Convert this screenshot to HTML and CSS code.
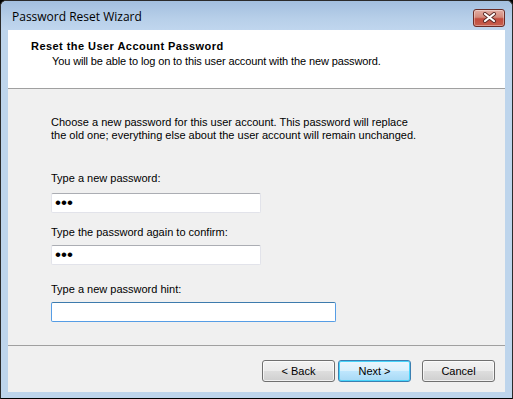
FILE: index.html
```html
<!DOCTYPE html>
<html lang="en">
<head>
  <meta charset="UTF-8">
  <title>Password Reset Wizard</title>
  <link rel="stylesheet" href="styles.css">
</head>
<body>
  <!-- Window frame -->
  <div class="window">
    <!-- Title bar with caption and close button -->
    <div class="titlebar">
      <span class="caption">Password Reset Wizard</span>
      <button class="close-btn" title="Close">
        <svg width="15" height="11" viewBox="0 0 15 11">
          <path d="M3 2 L12 9 M12 2 L3 9" stroke="#5a2a26" stroke-width="4" stroke-linecap="round"/>
          <path d="M3 2 L12 9 M12 2 L3 9" stroke="#fff" stroke-width="2.2" stroke-linecap="round"/>
        </svg>
      </button>
    </div>

    <div class="client">
      <!-- White wizard header -->
      <div class="wizard-header">
        <div class="wizard-title">Reset the User Account Password</div>
        <div class="wizard-subtitle">You will be able to log on to this user account with the new password.</div>
      </div>

      <!-- Page body with the form fields -->
      <div class="wizard-body">
        <p class="intro">
          Choose a new password for this user account. This password will replace<br>
          the old one; everything else about the user account will remain unchanged.
        </p>

        <label class="field-label first" for="pw1">Type a new password:</label>
        <input class="textbox short" type="password" id="pw1" value="abc">

        <label class="field-label" for="pw2">Type the password again to confirm:</label>
        <input class="textbox short" type="password" id="pw2" value="abc">

        <label class="field-label third" for="hint">Type a new password hint:</label>
        <input class="textbox long focused" type="text" id="hint">
      </div>

      <!-- Button row -->
      <div class="wizard-footer">
        <button class="btn back">&lt; Back</button>
        <button class="btn default">Next &gt;</button>
        <button class="btn cancel">Cancel</button>
      </div>
    </div>
  </div>
</body>
</html>
```

FILE: styles.css
```css
/* Page basics */
body {
  margin: 0;
  background: #000;
  font-family: 'Liberation Sans', Arial, sans-serif;
  font-size: 11px;
  color: #000;
}

/* Outer window frame */
.window {
  width: 511px;
  height: 397px;
  border: 1px solid #2b2b2b;
  border-bottom-color: #000;
  border-radius: 6px 6px 0 0;
  background: #bed5ec;
  display: flex;
  flex-direction: column;
}

/* Title bar */
.titlebar {
  height: 29px;
  display: flex;
  align-items: center;
  padding: 0 7px 0 11px;
  border-radius: 6px 6px 0 0;
  background: linear-gradient(#a3bfdf, #b7cfe9 60%, #c0d6ee);
}

.caption {
  font-family: 'Open Sans', 'Liberation Sans', sans-serif;
  font-size: 12px;
  margin-top: 1px;
}

/* Red close button */
.close-btn {
  box-sizing: border-box;
  margin-left: auto;
  margin-top: 4px;
  width: 32px;
  height: 18px;
  padding: 0;
  border: 1px solid #6b2c26;
  border-radius: 3px;
  background: linear-gradient(#e3aea4, #d38a7c 45%, #c24b3d 55%, #c7604e);
  box-shadow: inset 0 0 0 1px rgba(255,255,255,0.35);
  display: flex;
  align-items: center;
  justify-content: center;
}

/* Client area inside the frame */
.client {
  flex: 1;
  margin: 0 7px 6px 7px;
  background: #f0f0f0;
  display: flex;
  flex-direction: column;
}

/* White header band */
.wizard-header {
  background: #fff;
  height: 59px;
  border-bottom: 1px solid #a0a0a0;
  box-sizing: border-box;
  padding-top: 10px;
}

.wizard-title {
  font-weight: bold;
  padding-left: 23px;
  line-height: 13px;
  letter-spacing: 0.45px;
}

.wizard-subtitle {
  padding-left: 44px;
  line-height: 13px;
  margin-top: 2px;
  letter-spacing: -0.12px;
}

/* Main form area */
.wizard-body {
  flex: 1;
  padding: 27px 0 0 43px;
  display: flex;
  flex-direction: column;
  align-items: flex-start;
  border-bottom: 1px solid #a0a0a0;
}

.intro {
  margin: 0;
  line-height: 13px;
}

.field-label {
  line-height: 13px;
  margin-top: 13px;
  margin-bottom: 6px;
}

.field-label.first {
  margin-top: 30px;
  margin-bottom: 8px;
}

.field-label.third {
  margin-top: 18px;
}

/* Text boxes */
.textbox {
  box-sizing: border-box;
  height: 20px;
  margin: 0;
  padding: 0 3px;
  border: 1px solid #e2e3ea;
  border-top-color: #abadb3;
  border-radius: 2px;
  background: #fff;
  outline: none;
  font-family: 'Liberation Sans', Arial, sans-serif;
}

.textbox.short {
  width: 210px;
}

.textbox.long {
  width: 285px;
}

.textbox[type="password"] {
  font-size: 17px;
  padding-left: 3px;
}

/* Focused hint box gets the blue border */
.textbox.focused {
  border-color: #569de5;
  border-top-color: #3d7bad;
}

/* Bottom button row */
.wizard-footer {
  height: 46px;
  display: flex;
  align-items: flex-start;
  justify-content: flex-end;
  padding: 14px 10px 0 0;
  box-sizing: border-box;
}

.btn {
  box-sizing: border-box;
  width: 73px;
  height: 22px;
  padding: 0;
  border: 1px solid #707070;
  border-radius: 3px;
  background: linear-gradient(#f2f2f2, #ebebeb 49%, #dddddd 51%, #cfcfcf);
  box-shadow: inset 0 0 0 1px rgba(255,255,255,0.7);
  font-family: 'Liberation Sans', Arial, sans-serif;
  font-size: 11px;
  color: #000;
}

.btn.back {
  margin-right: 3px;
}

.btn.default {
  border-color: #3c7fb1;
  background: linear-gradient(#eaf6fd, #d9f0fc 49%, #bee6fd 51%, #a7d9f5);
  box-shadow: inset 0 0 0 1px #48d4fa;
  margin-right: 11px;
}
```
